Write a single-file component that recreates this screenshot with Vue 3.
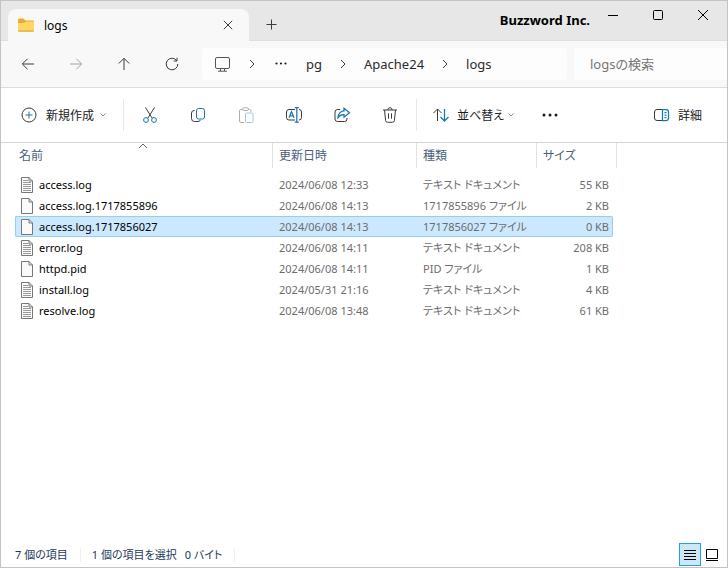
<script setup>
import { ref } from 'vue'

const files = [
  { name: 'access.log', date: '2024/06/08 12:33', type: 'テキスト ドキュメント', size: '55 KB', text: true },
  { name: 'access.log.1717855896', date: '2024/06/08 14:13', type: '1717855896 ファイル', size: '2 KB', text: false },
  { name: 'access.log.1717856027', date: '2024/06/08 14:13', type: '1717856027 ファイル', size: '0 KB', text: false },
  { name: 'error.log', date: '2024/06/08 14:11', type: 'テキスト ドキュメント', size: '208 KB', text: true },
  { name: 'httpd.pid', date: '2024/06/08 14:11', type: 'PID ファイル', size: '1 KB', text: false },
  { name: 'install.log', date: '2024/05/31 21:16', type: 'テキスト ドキュメント', size: '4 KB', text: true },
  { name: 'resolve.log', date: '2024/06/08 13:48', type: 'テキスト ドキュメント', size: '61 KB', text: true },
]
const selected = ref('access.log.1717856027')
const query = ref('')
</script>

<template>
  <div class="window">
    <header class="titlebar">
      <div class="tab">
        <svg class="folder" width="16" height="14" viewBox="0 0 16 14" aria-hidden="true">
          <path d="M0 1.5Q0 .5 1 .5H5.5L7.5 2.5H15Q16 2.5 16 3.5V12.5Q16 13.5 15 13.5H1Q0 13.5 0 12.5Z" fill="#e8ad2c" />
          <path d="M0 5H6L8 3.5H16V12Q16 13 15 13H1Q0 13 0 12Z" fill="#ffd766" />
          <path d="M0 12.5H16Q16 13.5 15 13.5H1Q0 13.5 0 12.5Z" fill="#e0a72e" />
        </svg>
        <span class="tab-name">logs</span>
        <button class="tab-close" aria-label="タブを閉じる">
          <svg width="10" height="10" viewBox="0 0 10 10"><path d="M.8.8 9.2 9.2M9.2.8.8 9.2" /></svg>
        </button>
      </div>
      <button class="tab-add" aria-label="新しいタブ">
        <svg width="11" height="11" viewBox="0 0 11 11"><path d="M5.5 .5V10.500M.5 5.500H10.500" /></svg>
      </button>
      <h1 class="brand">Buzzword Inc.</h1>
      <div class="controls">
        <button aria-label="最小化"><svg width="12" height="12" viewBox="0 0 12 12"><path d="M1 6.500H11" /></svg></button>
        <button aria-label="最大化"><svg width="12" height="12" viewBox="0 0 12 12"><rect x="1.500" y="1.500" width="9" height="9" rx="1" /></svg></button>
        <button aria-label="閉じる"><svg width="12" height="12" viewBox="0 0 12 12"><path d="M1 1 11 11M11 1 1 11" /></svg></button>
      </div>
    </header>

    <nav class="navbar">
      <div class="history">
        <button aria-label="戻る"><svg width="14" height="14" viewBox="0 0 14 14"><path d="M13 7H1.500M6.500 1.800 1.300 7 6.500 12.200" /></svg></button>
        <button aria-label="進む" disabled><svg width="14" height="14" viewBox="0 0 14 14"><path d="M1 7H12.500M7.500 1.800 12.700 7 7.500 12.200" /></svg></button>
        <button aria-label="上へ"><svg width="14" height="14" viewBox="0 0 14 14"><path d="M7 13V1.500M1.800 6.500 7 1.300 12.200 6.500" /></svg></button>
        <button aria-label="更新"><svg width="14" height="14" viewBox="0 0 14 14"><path d="M11.600 3.500A5.800 5.800 0 1 0 12.800 7M12 .8V4H8.700" /></svg></button>
      </div>
      <div class="address">
        <svg class="pc" width="17" height="17" viewBox="0 0 17 17" aria-hidden="true">
          <rect x="1.500" y="1.500" width="14" height="11" rx="1.500" /><path d="M6.500 12.500V15M10.500 12.500V15M4 15.200H13" />
        </svg>
        <svg class="chev" width="8" height="10" viewBox="0 0 8 10"><path d="M2 1 6 5 2 9" /></svg>
        <button class="more-path" aria-label="その他"><svg width="16" height="4" viewBox="0 0 16 4"><circle cx="3.500" cy="1.500" r="1.100" /><circle cx="8" cy="1.500" r="1.100" /><circle cx="12.500" cy="1.500" r="1.100" /></svg></button>
        <a href="#pg">pg</a>
        <svg class="chev" width="8" height="10" viewBox="0 0 8 10"><path d="M2 1 6 5 2 9" /></svg>
        <a href="#apache24">Apache24</a>
        <svg class="chev" width="8" height="10" viewBox="0 0 8 10"><path d="M2 1 6 5 2 9" /></svg>
        <a href="#logs">logs</a>
      </div>
      <input v-model="query" class="search" type="search" placeholder="logsの検索" aria-label="logsの検索" />
    </nav>

    <div class="toolbar" role="toolbar">
      <button class="labelled">
        <svg width="16" height="16" viewBox="0 0 16 16"><circle cx="8" cy="8" r="7" /><path class="blue" d="M8 4.500V11.500M4.500 8H11.500" /></svg>
        <span>新規作成</span>
        <svg class="down" width="8" height="8" viewBox="0 0 8 8"><path d="M1.500 2.500 4 5 6.500 2.500" /></svg>
      </button>
      <span class="rule"></span>
      <div class="tools">
        <button aria-label="切り取り"><svg width="18" height="18" viewBox="0 0 18 18"><path d="M4.500 1.500 11.300 12.300M13.500 1.500 6.700 12.300" /><circle class="blue" cx="5" cy="14" r="2.400" /><circle class="blue" cx="13" cy="14" r="2.400" /></svg></button>
        <button aria-label="コピー"><svg width="18" height="18" viewBox="0 0 18 18"><path d="M5.500 4.500Q2.500 4.500 2.500 7V12.500Q2.500 15.500 5.500 15.500H9Q10.800 15.500 11.300 14" /><rect class="blue" x="7.500" y="2.500" width="8" height="10.500" rx="2" /></svg></button>
        <button aria-label="貼り付け" disabled><svg width="18" height="18" viewBox="0 0 18 18"><path d="M5.500 3.500H4Q2.500 3.500 2.500 5V15Q2.500 16.500 4 16.500H7M11.500 3.500H12.500Q14 3.500 14 5V6" /><rect x="5.500" y="1.800" width="6" height="2.700" rx="1.300" /><rect class="blue" x="8.500" y="7" width="7.500" height="9.500" rx="1.200" /></svg></button>
        <button aria-label="名前の変更"><svg width="18" height="18" viewBox="0 0 18 18"><path d="M10 3.500H4Q1.500 3.500 1.500 6V11.500Q1.500 14 4 14H10M14 3.500Q16.500 3.500 16.500 6V11.500Q16.500 14 14 14" /><path class="blue bold" d="M11.800 1.500V16M9.800 1.500H13.800M9.800 16H13.800M4 11.700 6.500 5.700 9 11.700M5 9.800H8" /></svg></button>
        <button aria-label="共有"><svg width="18" height="18" viewBox="0 0 18 18"><path d="M7 3.500H4.500Q2 3.500 2 6V13Q2 15.500 4.500 15.500H11.500Q14 15.500 14 13V12" /><path class="blue bold" d="M11 2.200 16.500 6.700 11 11.200V8.700Q7.500 8.500 5 11.700Q5.500 5.500 11 4.900Z" /></svg></button>
        <button aria-label="削除"><svg width="18" height="18" viewBox="0 0 18 18"><path d="M2 4H16M3.500 4 4.600 14.500Q4.800 16.300 6.500 16.300H11.500Q13.200 16.300 13.400 14.500L14.500 4M6.800 4Q7 1.700 9 1.700T11.200 4M7.500 7.300V12.700M10.500 7.300V12.700" /></svg></button>
      </div>
      <span class="rule"></span>
      <button class="labelled sort">
        <svg width="18" height="16" viewBox="0 0 18 16"><path d="M5.500 14V2M1.500 6 5.500 2 9.500 6" /><path class="blue bold" d="M12.500 2V14M8.500 10 12.500 14 16.500 10" /></svg>
        <span>並べ替え</span>
        <svg class="down" width="8" height="8" viewBox="0 0 8 8"><path d="M1.500 2.500 4 5 6.500 2.500" /></svg>
      </button>
      <button class="more" aria-label="もっと見る"><svg width="18" height="4" viewBox="0 0 18 4"><circle cx="3" cy="2" r="1.500" /><circle cx="9" cy="2" r="1.500" /><circle cx="15" cy="2" r="1.500" /></svg></button>
      <button class="labelled details">
        <svg width="17" height="14" viewBox="0 0 17 14"><path d="M10.500 1.500H4Q1.500 1.500 1.500 4V10Q1.500 12.500 4 12.500H10.500" /><path class="blue bold" d="M9.500 1.500H13Q15.500 1.500 15.500 4V10Q15.500 12.500 13 12.500H9.500ZM11.500 4.500H13.500M11.500 7H13.500M11.500 9.500H13.500" /></svg>
        <span>詳細</span>
      </button>
    </div>

    <main class="content">
      <table>
        <colgroup>
          <col class="c-name" /><col class="c-date" /><col class="c-type" /><col class="c-size" /><col class="c-end" />
        </colgroup>
        <thead>
          <tr>
            <th scope="col" aria-sort="ascending">
              <button>名前</button>
              <svg class="sorted" width="10" height="6" viewBox="0 0 10 6"><path d="M1 5 5 1 9 5" /></svg>
            </th>
            <th scope="col"><button>更新日時</button></th>
            <th scope="col"><button>種類</button></th>
            <th scope="col" colspan="2"><button>サイズ</button></th>
          </tr>
        </thead>
        <tbody>
          <tr v-for="f in files" :key="f.name" :class="{ selected: f.name === selected }" @click="selected = f.name">
            <td>
              <div class="file">
                <svg width="12" height="16" viewBox="0 0 12 16" aria-hidden="true">
                  <path class="sheet" d="M.5.5H8L11.500 4V15.500H.5Z" />
                  <path class="fold" d="M8 .5V4H11.500" />
                  <path v-if="f.text" class="lines" d="M2 3.500H7M2 5.500H10M2 7.500H10M2 9.500H10M2 11.500H10M2 13.500H10" />
                </svg>
                <span>{{ f.name }}</span>
              </div>
            </td>
            <td>{{ f.date }}</td>
            <td>{{ f.type }}</td>
            <td>{{ f.size }}</td>
          </tr>
        </tbody>
      </table>
    </main>

    <footer class="status">
      <span class="count">7 個の項目</span>
      <span class="picked"><span>1 個の項目を選択</span><span>0 バイト</span></span>
      <div class="views">
        <button class="on" aria-label="詳細表示" aria-pressed="true"><svg width="14" height="14" viewBox="0 0 14 14"><path d="M1 2.500H13M1 5.500H13M1 8.500H13M1 11.500H13" /></svg></button>
        <button aria-label="縮小版表示" aria-pressed="false"><svg width="14" height="14" viewBox="0 0 14 14"><path d="M1.500 1.500H12.500V10.500H1.500ZM1 12.500H13" /></svg></button>
      </div>
    </footer>
  </div>
</template>

<style>
body {
  margin: 0;
  background: #fff;
}
</style>

<style scoped>
* {
  box-sizing: border-box;
}
.window {
  display: flex;
  flex-direction: column;
  min-height: 100vh;
  border: 1px solid #c3c3c3;
  background: #fff;
  color: #1b1b1b;
  font-family: "Noto Sans", "Noto Sans CJK JP", sans-serif;
  font-size: 12px;
  font-feature-settings: "palt";
}
button {
  display: inline-flex;
  align-items: center;
  justify-content: center;
  padding: 0;
  border: 0;
  background: none;
  color: inherit;
  font: inherit;
  font-feature-settings: inherit;
}
svg {
  display: block;
  flex: none;
  fill: none;
  stroke: #3b3b3b;
  stroke-width: 1;
}
.titlebar {
  display: flex;
  height: 40px;
  padding: 0 2px 0 7px;
  background: #e7e7e7;
  border-bottom: 1px solid #dedede;
}
.tab {
  position: relative;
  display: flex;
  align-items: center;
  width: 241px;
  height: 32px;
  margin-top: 8px;
  padding: 0 11px 0 10px;
  border-radius: 8px 8px 0 0;
  background: #f8f8f8;
}
.folder {
  stroke: none;
}
.tab-name {
  flex: 1;
  margin-left: 10px;
  color: #000;
}
.tab-close {
  width: 20px;
  height: 20px;
}
.tab-add {
  width: 32px;
  margin: 8px 0 0 6px;
}
.brand {
  margin: 0 0 0 auto;
  color: #000;
  font-size: 13px;
  font-weight: 700;
  line-height: 38px;
}
.controls {
  display: flex;
  height: 28px;
}
.controls button {
  width: 45px;
}
.controls svg {
  stroke: #000;
}
.navbar {
  display: flex;
  align-items: center;
  height: 47px;
  padding-left: 11px;
  background: #f8f8f8;
  border-bottom: 1px solid #dcdcdc;
}
.history,
.tools {
  display: flex;
  gap: 16px;
}
.history {
  margin-right: 14px;
}
.history button,
.tools button {
  width: 32px;
  height: 32px;
}
.history button:disabled svg {
  stroke: #a3a3a3;
}
.address {
  display: flex;
  flex: 1;
  align-items: center;
  gap: 17px;
  height: 32px;
  padding-left: 12px;
  border-radius: 4px;
  background: #fdfdfd;
  font-size: 13px;
}
.address a {
  color: #2b2b2b;
  text-decoration: none;
}
.pc {
  stroke: #555;
}
.more-path svg,
.more svg {
  fill: #1b1b1b;
  stroke: none;
}
.search {
  width: 153px;
  height: 32px;
  margin-left: 7px;
  padding: 0 16px;
  border: 0;
  border-radius: 4px 0 0 4px;
  outline: 0;
  background: #fdfdfd;
  color: #1b1b1b;
  font: inherit;
  font-size: 13px;
  font-feature-settings: inherit;
}
.search::placeholder {
  color: #757575;
  opacity: 1;
}
.toolbar {
  display: flex;
  align-items: center;
  height: 55px;
  padding: 0 25px 0 20px;
  border-bottom: 1px solid #d5d5d5;
}
.blue {
  stroke: #1877b5;
}
.bold {
  stroke-width: 1.25;
}
.labelled {
  gap: 9px;
  height: 32px;
  white-space: nowrap;
}
.labelled .down {
  margin-left: -4px;
  stroke: #8c8c8c;
}
.rule {
  width: 1px;
  height: 32px;
  margin: 0 10px 0 16px;
  background: #e8e8e8;
}
.tools + .rule {
  margin: 0 15px 0 10px;
}
.tools button:disabled svg {
  opacity: 0.4;
}
.sort {
  gap: 7px;
}
.more {
  width: 32px;
  height: 32px;
  margin-left: 19px;
}
.details {
  gap: 8px;
  margin-left: auto;
}
.content {
  flex: 1;
  padding-left: 14px;
}
table {
  width: 602px;
  table-layout: fixed;
  border-spacing: 0;
  color: #6d6d6d;
}
.c-name { width: 258px; }
.c-date { width: 144px; }
.c-type { width: 120px; }
.c-size { width: 76px; }
.c-end { width: 4px; }
th {
  position: relative;
  height: 25px;
  padding: 0 6px;
  border-right: 1px solid #e2e2e2;
  color: #4c607a;
  font-weight: 400;
  text-align: left;
  line-height: 24px;
}
th:first-child {
  padding-left: 4px;
}
th button {
  display: block;
}
.sorted {
  position: absolute;
  top: 0;
  left: calc(50% - 6px);
  stroke: #666;
}
tbody::before {
  content: "";
  display: block;
  height: 6px;
}
td {
  height: 21px;
  padding: 0 6px;
  font-size: 11px;
  line-height: 21px;
  white-space: nowrap;
}
td:last-child {
  padding-right: 4px;
  text-align: right;
}
.file {
  display: flex;
  align-items: center;
  gap: 6px;
  height: 21px;
  color: #000;
}
.file .sheet {
  fill: #fafafa;
  stroke: #777;
}
.file .fold {
  stroke: #777;
}
.file .lines {
  stroke: #999;
}
.selected td {
  border: 1px solid #99cde9;
  border-width: 1px 0;
  background: #cce8ff;
  line-height: 19px;
}
.selected td:first-child {
  border-left-width: 1px;
  border-radius: 2px 0 0 2px;
  padding-left: 5px;
}
.selected td:last-child {
  border-right-width: 1px;
  border-radius: 0 2px 2px 0;
  padding-right: 3px;
}
.selected .file {
  height: 19px;
}
.status {
  display: flex;
  align-items: center;
  height: 25px;
  padding: 0 4px 0 14px;
  color: #1e395b;
  font-size: 11px;
}
.count,
.picked {
  display: flex;
  gap: 8px;
  padding-right: 12px;
  border-right: 1px solid #eee;
  line-height: 14px;
}
.picked {
  padding-left: 11px;
}
.views {
  display: flex;
  margin-left: auto;
}
.views button {
  width: 22px;
  height: 23px;
}
.views svg {
  stroke: #000;
}
.views .on {
  border: 1px solid #26a0da;
  background: #cbe8f6;
}
</style>
